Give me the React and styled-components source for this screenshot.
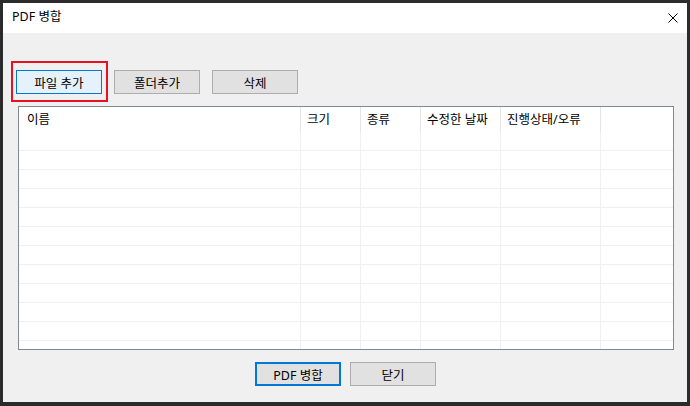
import React from "react";
import styled, { createGlobalStyle } from "styled-components";

// ===== Global =====
const GlobalStyle = createGlobalStyle`
  html, body {
    margin: 0;
    padding: 0;
    background: #2b2b2b;
  }
  #root {
    width: 690px;
    height: 406px;
    padding: 3px 3px 4px 3px;
    box-sizing: border-box;
  }
  * {
    font-family: "Noto Sans", "Noto Sans CJK KR", sans-serif;
  }
`;

// ===== Window =====
const Dialog = styled.div`
  display: flex;
  flex-direction: column;
  height: 399px;
  background: #f0f0f0;
  color: #000;
  font-size: 12.5px;
`;

const TitleBar = styled.div`
  display: flex;
  align-items: center;
  justify-content: space-between;
  height: 30px;
  padding: 0 9px;
  background: #fff;
`;

const Title = styled.span`
  font-size: 12.5px;
  line-height: 1;
  margin-top: -1px;
`;

const CloseIcon = styled.svg`
  width: 10px;
  height: 10px;
  display: block;
`;

// ===== Buttons =====
const Toolbar = styled.div`
  display: flex;
  gap: 12px;
  padding: 37px 0 0 13px;
`;

const Button = styled.button`
  width: 86px;
  height: 24px;
  box-sizing: border-box;
  padding: 0;
  font-size: 12.5px;
  color: #000;
  background: ${(p) => (p.$focused ? "#e5f1fb" : "#e1e1e1")};
  border: ${(p) =>
    p.$default ? "2px solid #0078d7" : p.$focused ? "1px solid #0078d7" : "1px solid #adadad"};
  border-radius: 0;
  cursor: default;
`;

const Highlight = styled.span`
  position: relative;
  display: inline-flex;

  &::after {
    content: "";
    position: absolute;
    top: -9px;
    left: -5px;
    right: -6px;
    bottom: -8px;
    border: 2px solid #e81123;
    pointer-events: none;
  }
`;

// ===== List view =====
const ListView = styled.div`
  margin: 12px 13px 0 15px;
  height: 244px;
  box-sizing: border-box;
  border: 1px solid #828790;
  background: #fff;
  overflow: hidden;
`;

const HeaderRow = styled.div`
  display: flex;
  height: 25px;
`;

const HeaderCell = styled.div`
  display: flex;
  align-items: center;
  width: ${(p) => p.$w}px;
  flex: ${(p) => (p.$w ? "none" : "1")};
  box-sizing: border-box;
  padding-left: ${(p) => p.$pad || 6}px;
  padding-bottom: 2px;
  border-right: ${(p) => (p.$w ? "1px solid #e5e5e5" : "none")};
  white-space: nowrap;
`;

const Row = styled.div`
  display: flex;
  height: 19px;
  box-sizing: border-box;
  border-bottom: 1px solid #f0f0f0;
`;

const Cell = styled.div`
  width: ${(p) => p.$w}px;
  flex: ${(p) => (p.$w ? "none" : "1")};
  box-sizing: border-box;
  border-right: ${(p) => (p.$w ? "1px solid #f0f0f0" : "none")};
`;

const Footer = styled.div`
  display: flex;
  justify-content: center;
  gap: 9px;
  margin-top: 12px;
  padding-left: 1px;
`;

const columns = [
  { label: "이름", w: 282, pad: 8 },
  { label: "크기", w: 60 },
  { label: "종류", w: 60 },
  { label: "수정한 날짜", w: 80 },
  { label: "진행상태/오류", w: 100 },
];

const rows = Array.from({ length: 12 });

const App = () => {
  return (
    <>
      <GlobalStyle />
      <Dialog>
        <TitleBar>
          <Title>PDF 병합</Title>
          <CloseIcon viewBox="0 0 10 10">
            <path d="M0.5 0.5 L9.5 9.5 M9.5 0.5 L0.5 9.5" stroke="#000" strokeWidth="1" />
          </CloseIcon>
        </TitleBar>

        <Toolbar>
          <Highlight>
            <Button $focused>파일 추가</Button>
          </Highlight>
          <Button>폴더추가</Button>
          <Button>삭제</Button>
        </Toolbar>

        <ListView>
          <HeaderRow>
            {columns.map((c) => (
              <HeaderCell key={c.label} $w={c.w} $pad={c.pad}>
                {c.label}
              </HeaderCell>
            ))}
            <HeaderCell />
          </HeaderRow>
          {rows.map((_, i) => (
            <Row key={i}>
              {columns.map((c) => (
                <Cell key={c.label} $w={c.w} />
              ))}
              <Cell />
            </Row>
          ))}
        </ListView>

        <Footer>
          <Button $default>PDF 병합</Button>
          <Button>닫기</Button>
        </Footer>
      </Dialog>
    </>
  );
};

export default App;
